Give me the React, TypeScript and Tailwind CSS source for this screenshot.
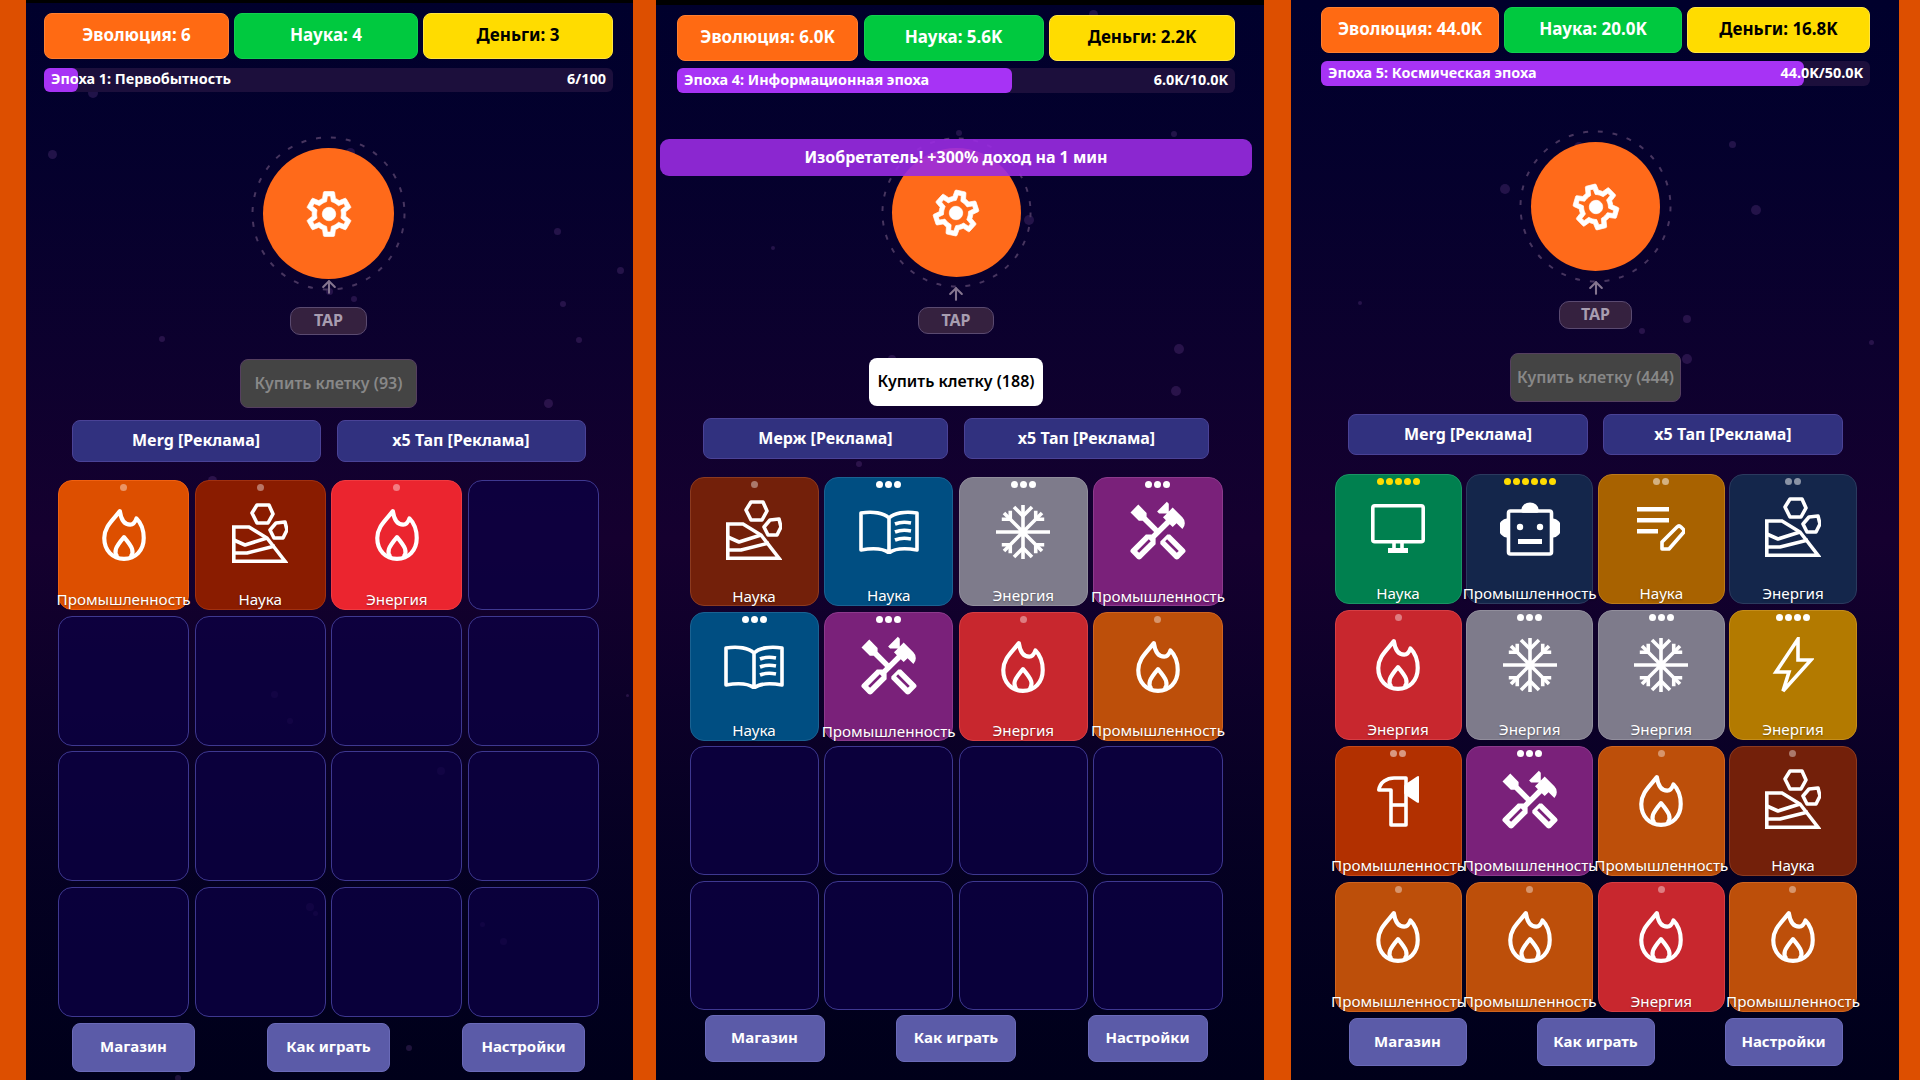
import type { ReactNode } from 'react'
import { ArrowUp } from 'lucide-react'
import { MdOutlineHandyman } from 'react-icons/md'

function Line({ w, h, cls, children }: { w: number; h: number; cls: string; children: ReactNode }) {
  return (
    <svg
      viewBox={`0 0 ${w} ${h}`}
      fill="none"
      stroke="white"
      strokeWidth="3.6"
      strokeLinejoin="round"
      className={cls}
    >
      {children}
    </svg>
  )
}

const FireIcon = () => (
  <Line w={42} h={52} cls="h-[54px] w-[46px]">
    <path d="M17 3C18 10 21 16 27 16C30 16 32 13 33 10C38 15 40 22 40 29C40 41 32 49 21 49C10 49 2 41 2 29C2 18 10 12 17 3Z" strokeWidth="4" />
    <path d="M14.5 47C11 42 12.5 38 21 28C29.5 38 31 42 27.5 47" strokeWidth="4" />
  </Line>
)

const RocksIcon = () => (
  <Line w={56} h={60} cls="mb-[5px] h-[60px] w-[56px]">
    <path d="M1.8 24H17L35 35L53 58.2H1.8Z" strokeLinejoin="miter" />
    <path d="M1.8 37L13 42L35 35" />
    <path d="M1.8 50L15 50L43 43" />
    <path d="M25 2L37 2L41 11L36 20L25 20L20 10Z" />
    <path d="M44 20L53 19L55 27L51 35L42 35L38 27Z" />
  </Line>
)

const BookIcon = () => (
  <Line w={60} h={44} cls="h-[44px] w-[60px]">
    <path d="M30 8C25 3 14 1 2 3V40C14 38 24 38 30 43C36 38 46 38 58 40V3C46 1 35 3 30 8V43" />
    <path d="M36 14C41 12 47 12 52 13" />
    <path d="M36 22C41 20 47 20 52 21" />
    <path d="M36 30C41 28 47 28 52 29" />
  </Line>
)

const SnowIcon = () => (
  <Line w={56} h={56} cls="size-[56px]">
    <path d="M28 1V55M1 28H55M9 9L47 47M47 9L9 47" />
    {[0, 180].map((a) => (
      <path key={a} d="M19 3L28 12L37 3" transform={`rotate(${a} 28 28)`} />
    ))}
    {[45, 135, 225, 315].map((a) => (
      <path key={a} d="M22 4L28 10L34 4" transform={`rotate(${a} 28 28)`} />
    ))}
  </Line>
)

const ToolsIcon = () => <MdOutlineHandyman className="size-[66px] shrink-0 text-white" />

const MonitorIcon = () => (
  <Line w={54} h={50} cls="h-[50px] w-[54px]">
    <rect x="1.8" y="1.8" width="50.4" height="36" rx="2" />
    <path d="M23 38V45M31 38V45" />
    <rect x="17" y="44" width="20" height="5" fill="white" stroke="none" />
  </Line>
)

const RobotIcon = () => (
  <Line w={60} h={54} cls="h-[54px] w-[60px]">
    <rect x="8.5" y="9" width="43" height="43" rx="2" strokeWidth="3.6" />
    <path d="M23 9C23 0 37 0 37 9Z" fill="white" />
    <path d="M8 18C-2 19 -2 33 8 34Z" fill="white" />
    <path d="M52 18C62 19 62 33 52 34Z" fill="white" />
    <circle cx="20" cy="25" r="3.2" fill="white" stroke="none" />
    <circle cx="40" cy="25" r="3.2" fill="white" stroke="none" />
    <rect x="18" y="37" width="24" height="5" fill="white" stroke="none" />
  </Line>
)

const NoteIcon = () => (
  <Line w={48} h={44} cls="h-[44px] w-[48px]">
    <rect x="0" y="0" width="32" height="4.5" fill="white" stroke="none" />
    <rect x="0" y="11" width="32" height="4.5" fill="white" stroke="none" />
    <rect x="0" y="22" width="21" height="4.5" fill="white" stroke="none" />
    <path d="M25 42V35L40 20Q42 18 44 20L46 22Q48 24 46 26L32 42Z" />
  </Line>
)

const BoltIcon = () => (
  <Line w={42} h={56} cls="h-[56px] w-[42px]">
    <path d="M26 2L4 35H17L11 54L39 23H26Z" strokeLinejoin="miter" />
  </Line>
)

const HammerIcon = () => (
  <Line w={42} h={51} cls="h-[51px] w-[42px]">
    <path d="M1.8 14C3 6 10 2 17 2H29V49H14V14Z" />
    <path d="M14 29H29" />
    <path d="M29 10L41 2V25L29 17Z" fill="white" />
  </Line>
)

const icons = {
  fire: FireIcon,
  rocks: RocksIcon,
  book: BookIcon,
  snow: SnowIcon,
  tools: ToolsIcon,
  monitor: MonitorIcon,
  robot: RobotIcon,
  note: NoteIcon,
  bolt: BoltIcon,
  hammer: HammerIcon,
}

type IconName = keyof typeof icons
type CellData = { icon: IconName; label: string; bg: string; dots: number }

const IND = 'Промышленность'
const SCI = 'Наука'
const ENE = 'Энергия'

const firstCells: CellData[] = [
  { icon: 'fire', label: IND, bg: 'bg-[#dd4f00] border-[#f06010]', dots: 1 },
  { icon: 'rocks', label: SCI, bg: 'bg-[#8a1c00] border-[#a03010]', dots: 1 },
  { icon: 'fire', label: ENE, bg: 'bg-[#eb252f] border-[#f03a40]', dots: 1 },
]

const secondCells: CellData[] = [
  { icon: 'rocks', label: SCI, bg: 'bg-[#73200a] border-[#8c3a20]', dots: 1 },
  { icon: 'book', label: SCI, bg: 'bg-[#004e82] border-[#1a6292]', dots: 3 },
  { icon: 'snow', label: ENE, bg: 'bg-[#7e7b8b] border-[#918e9c]', dots: 3 },
  { icon: 'tools', label: IND, bg: 'bg-[#7a217a] border-[#8c3a8c]', dots: 3 },
  { icon: 'book', label: SCI, bg: 'bg-[#004e82] border-[#1a6292]', dots: 3 },
  { icon: 'tools', label: IND, bg: 'bg-[#7a217a] border-[#8c3a8c]', dots: 3 },
  { icon: 'fire', label: ENE, bg: 'bg-[#c8272e] border-[#d63e44]', dots: 1 },
  { icon: 'fire', label: IND, bg: 'bg-[#bd4f0a] border-[#cf6420]', dots: 1 },
]

const thirdCells: CellData[] = [
  { icon: 'monitor', label: SCI, bg: 'bg-[#00804f] border-[#1a9464]', dots: 5 },
  { icon: 'robot', label: IND, bg: 'bg-[#14264b] border-[#2b3a5e]', dots: 6 },
  { icon: 'note', label: SCI, bg: 'bg-[#a86200] border-[#bb7a1a]', dots: 2 },
  { icon: 'rocks', label: ENE, bg: 'bg-[#14264b] border-[#2b3a5e]', dots: 2 },
  { icon: 'fire', label: ENE, bg: 'bg-[#c8272e] border-[#d63e44]', dots: 1 },
  { icon: 'snow', label: ENE, bg: 'bg-[#7e7b8b] border-[#918e9c]', dots: 3 },
  { icon: 'snow', label: ENE, bg: 'bg-[#7e7b8b] border-[#918e9c]', dots: 3 },
  { icon: 'bolt', label: ENE, bg: 'bg-[#b37a00] border-[#c48d1a]', dots: 4 },
  { icon: 'hammer', label: IND, bg: 'bg-[#b23000] border-[#c4481a]', dots: 2 },
  { icon: 'tools', label: IND, bg: 'bg-[#7a217a] border-[#8c3a8c]', dots: 3 },
  { icon: 'fire', label: IND, bg: 'bg-[#bd4f0a] border-[#cf6420]', dots: 1 },
  { icon: 'rocks', label: SCI, bg: 'bg-[#73200a] border-[#8c3a20]', dots: 1 },
  { icon: 'fire', label: IND, bg: 'bg-[#bd4f0a] border-[#cf6420]', dots: 1 },
  { icon: 'fire', label: IND, bg: 'bg-[#bd4f0a] border-[#cf6420]', dots: 1 },
  { icon: 'fire', label: ENE, bg: 'bg-[#c8272e] border-[#d63e44]', dots: 1 },
  { icon: 'fire', label: IND, bg: 'bg-[#bd4f0a] border-[#cf6420]', dots: 1 },
]

const panels = [
  {
    panelCls: 'w-[607px] pt-[13px]',
    topCls: 'top-0 h-[3px]',
    innerCls: 'ml-[18px] w-[569px]',
    stats: [
      { text: 'Эволюция: 6', w: 'w-[185px]' },
      { text: 'Наука: 4', w: 'w-[184px]' },
      { text: 'Деньги: 3', w: 'w-[190px]' },
    ],
    statGap: 'gap-[5px]',
    progressCls: 'mt-[9px] h-[24px]',
    fill: 6,
    epoch: 'Эпоха 1: Первобытность',
    progress: '6/100',
    ringCls: 'mt-[44px] size-[155px]',
    circleCls: 'size-[131px]',
    gearCls: '',
    arrowCls: '-bottom-[6px]',
    tapCls: 'mt-[16px] w-[77px] h-[28px]',
    buy: 'Купить клетку (93)',
    buyOn: false,
    buyCls: 'mt-[24px] w-[177px] h-[49px]',
    adsRowCls: 'mt-[12px] gap-[16px] h-[42px]',
    adW: 'w-[249px]',
    mergeText: 'Merg [Реклама]',
    gridCls: 'mt-[18px] w-[541px] gap-[5.67px] auto-rows-[130px]',
    cells: firstCells,
    bottomCls: 'mt-[6px] w-[513px] h-[49px]',
    bottomW: 'w-[123px]',
    specks: [[22, 150, 9], [528, 228, 7], [591, 267, 7], [534, 301, 6], [550, 337, 6], [518, 399, 9], [133, 336, 6], [62, 88, 10], [182, 476, 9], [600, 694, 3], [245, 691, 7], [261, 718, 6], [411, 767, 8], [280, 903, 8], [287, 911, 5], [474, 938, 7], [454, 922, 5], [149, 1075, 6], [380, 1045, 6], [320, 148, 9], [325, 296, 6], [300, 288, 7]],
  },
  {
    panelCls: 'w-[608px] ml-[23px] pt-[15px]',
    topCls: 'top-0 h-[5px]',
    innerCls: 'ml-[21px] w-[558px]',
    stats: [
      { text: 'Эволюция: 6.0K', w: 'w-[181px]' },
      { text: 'Наука: 5.6K', w: 'w-[180px]' },
      { text: 'Деньги: 2.2K', w: 'w-[186px]' },
    ],
    statGap: 'gap-[5.5px]',
    progressCls: 'mt-[7px] h-[25px]',
    fill: 60,
    epoch: 'Эпоха 4: Информационная эпоха',
    progress: '6.0K/10.0K',
    ringCls: 'mt-[44px] size-[151px]',
    circleCls: 'size-[129px]',
    gearCls: 'rotate-[12deg]',
    arrowCls: '-bottom-[16px]',
    tapCls: 'mt-[19px] w-[76px] h-[27px]',
    buy: 'Купить клетку (188)',
    buyOn: true,
    buyCls: 'mt-[24px] w-[174px] h-[48px]',
    adsRowCls: 'mt-[12px] gap-[16px] h-[41px]',
    adW: 'w-[245px]',
    mergeText: 'Мерж [Реклама]',
    gridCls: 'mt-[18px] w-[533px] gap-[5.67px] auto-rows-[129px]',
    cells: secondCells,
    bottomCls: 'mt-[5px] w-[503px] h-[47px]',
    bottomW: 'w-[120px]',
    specks: [[433, 10, 9], [404, 74, 8], [515, 131, 6], [115, 246, 4], [518, 344, 10], [515, 386, 10], [232, 355, 8], [200, 461, 6], [368, 215, 10], [300, 130, 6]],
  },
  {
    panelCls: 'w-[608px] ml-[27px] pt-[7px]',
    topCls: 'hidden',
    innerCls: 'ml-[30px] w-[549px]',
    stats: [
      { text: 'Эволюция: 44.0K', w: 'w-[178px]' },
      { text: 'Наука: 20.0K', w: 'w-[178px]' },
      { text: 'Деньги: 16.8K', w: 'w-[183px]' },
    ],
    statGap: 'gap-[5px]',
    progressCls: 'mt-[8px] h-[25px]',
    fill: 88,
    epoch: 'Эпоха 5: Космическая эпоха',
    progress: '44.0K/50.0K',
    ringCls: 'mt-[44px] size-[153px]',
    circleCls: 'size-[129px]',
    gearCls: '-rotate-[14deg]',
    arrowCls: '-bottom-[15px]',
    tapCls: 'mt-[18px] w-[73px] h-[28px]',
    buy: 'Купить клетку (444)',
    buyOn: false,
    buyCls: 'mt-[24px] w-[171px] h-[49px]',
    adsRowCls: 'mt-[12px] gap-[15px] h-[41px]',
    adW: 'w-[240px]',
    mergeText: 'Merg [Реклама]',
    gridCls: 'mt-[19px] w-[522px] gap-x-[4.67px] gap-y-[6px] auto-rows-[130px]',
    cells: thirdCells,
    bottomCls: 'mt-[6px] w-[494px] h-[48px]',
    bottomW: 'w-[118px]',
    specks: [[438, 141, 7], [209, 184, 10], [460, 205, 10], [67, 301, 4], [392, 315, 8], [348, 328, 6], [578, 340, 5], [391, 354, 10], [283, 142, 10]],
  },
]

const statColors = [
  'bg-[#ff6a13] border-[#ff7f30] text-white',
  'bg-[#00c93f] border-[#10d050] text-white',
  'bg-[#ffdc00] border-[#ffe540] text-black',
]

function Gear({ className }: { className: string }) {
  return (
    <svg viewBox="0 0 24 24" fill="white" stroke="white" strokeWidth="0.3" className={`size-[54px] ${className}`}>
      <path d="M19.43 12.98c.04-.32.07-.64.07-.98 0-.34-.03-.66-.07-.98l2.11-1.65c.19-.15.24-.42.12-.64l-2-3.46c-.09-.16-.26-.25-.44-.25-.06 0-.12.01-.17.03l-2.49 1c-.52-.4-1.08-.73-1.69-.98l-.38-2.65C14.46 2.18 14.25 2 14 2h-4c-.25 0-.46.18-.49.42l-.38 2.65c-.61.25-1.17.59-1.69.98l-2.49-1c-.06-.02-.12-.03-.18-.03-.17 0-.34.09-.43.25l-2 3.46c-.13.22-.07.49.12.64l2.11 1.65c-.04.32-.07.65-.07.98 0 .33.03.66.07.98l-2.11 1.65c-.19.15-.24.42-.12.64l2 3.46c.09.16.26.25.44.25.06 0 .12-.01.17-.03l2.49-1c.52.4 1.08.73 1.69.98l.38 2.65c.03.24.24.42.49.42h4c.25 0 .46-.18.49-.42l.38-2.65c.61-.25 1.17-.59 1.69-.98l2.49 1c.06.02.12.03.18.03.17 0 .34-.09.43-.25l2-3.46c.12-.22.07-.49-.12-.64l-2.11-1.65zm-1.98-1.71c.04.31.05.52.05.73 0 .21-.02.43-.05.73l-.14 1.13.89.7 1.08.84-.7 1.21-1.27-.51-1.04-.42-.9.68c-.43.32-.84.56-1.25.73l-1.06.43-.16 1.13-.2 1.35h-1.4l-.19-1.35-.16-1.13-1.06-.43c-.43-.18-.83-.41-1.23-.71l-.91-.7-1.06.43-1.27.51-.7-1.21 1.08-.84.89-.7-.14-1.13c-.03-.31-.05-.54-.05-.74s.02-.43.05-.73l.14-1.13-.89-.7-1.08-.84.7-1.21 1.27.51 1.04.42.9-.68c.43-.32.84-.56 1.25-.73l1.06-.43.16-1.13.2-1.35h1.39l.19 1.35.16 1.13 1.06.43c.43.18.83.41 1.23.71l.91.7 1.06-.43 1.27-.51.7 1.21-1.07.85-.89.7.14 1.13z" />
      <circle cx="12" cy="12" r="3" />
    </svg>
  )
}

function Cell({ cell }: { cell?: CellData }) {
  if (!cell) {
    return <div className="rounded-[14px] border border-[#3e3890] bg-[#0c0044]/75" />
  }
  const Icon = icons[cell.icon]
  // 5+ dots turn gold
  const dotCls = cell.dots >= 5 ? 'bg-[#ffdc00]' : 'bg-white'
  const dotOpacity = cell.dots === 1 ? 'opacity-40' : cell.dots === 2 ? 'opacity-50' : 'opacity-100'
  return (
    <div className={`flex flex-col items-center rounded-[14px] border pt-[3px] ${cell.bg}`}>
      <div className="flex h-[8px] items-center gap-[2px]">
        {Array.from({ length: cell.dots }).map((_, i) => (
          <span key={i} className={`size-[7px] rounded-full ${dotCls} ${dotOpacity}`} />
        ))}
      </div>
      <div className="mt-[14px] flex h-[60px] items-center justify-center">
        <Icon />
      </div>
      <span className="mt-[24px] whitespace-nowrap text-[15.2px] leading-[20px] text-white [text-shadow:0_1px_2px_rgba(0,0,0,0.35)]">
        {cell.label}
      </span>
    </div>
  )
}

function Panel({ panel, banner }: { panel: (typeof panels)[number]; banner?: string }) {
  const empties = 16 - panel.cells.length
  return (
    <div className={`relative h-[1080px] shrink-0 overflow-hidden bg-gradient-to-b from-[#00002c] via-[#15002f] via-50% to-[#00001a] ${panel.panelCls}`}>
      <div className={`absolute inset-x-0 bg-black ${panel.topCls}`} />

      {/* floating background specks */}
      {panel.specks.map(([x, y, d], i) => (
        <span
          key={i}
          className="absolute rounded-full bg-[#7a4aa0]/25"
          style={{ left: x, top: y, width: d, height: d }}
        />
      ))}

      <div className={`relative flex flex-col items-center ${panel.innerCls}`}>
        {/* Resources */}
        <div className={`flex w-full ${panel.statGap}`}>
          {panel.stats.map((s, i) => (
            <div
              key={s.text}
              className={`flex h-[46px] items-center justify-center rounded-[8px] border pb-[2px] text-[17px] font-bold ${statColors[i]} ${s.w}`}
            >
              {s.text}
            </div>
          ))}
        </div>

        {/* Epoch progress */}
        <div className={`relative w-full rounded-[6px] bg-[#1c0f3c] ${panel.progressCls}`}>
          <div className="h-full rounded-[6px] bg-[#a733f5]" style={{ width: `${panel.fill}%` }} />
          <div className="absolute inset-0 flex items-center justify-between px-[7px] pb-[2px] text-[14.4px] font-bold text-white">
            <span>{panel.epoch}</span>
            <span>{panel.progress}</span>
          </div>
        </div>

        {/* Tap button */}
        <div className={`relative flex items-center justify-center ${panel.ringCls}`}>
          <svg viewBox="0 0 155 155" className="absolute inset-0 size-full" fill="none">
            <circle cx="77.5" cy="77.5" r="76" stroke="#47355f" strokeWidth="2" strokeDasharray="5 10" />
          </svg>
          <div className={`relative flex items-center justify-center rounded-full bg-[#ff6a1a] ${panel.circleCls}`}>
            <Gear className={panel.gearCls} />
          </div>
          <ArrowUp className={`absolute left-1/2 size-[20px] -translate-x-1/2 text-[#85758f] ${panel.arrowCls}`} strokeWidth={2.5} />
        </div>

        <div className={`flex items-center justify-center rounded-[10px] border border-[#5a4a70] bg-[#35213f] pb-[2px] text-[16px] font-bold text-[#a89db0] ${panel.tapCls}`}>
          TAP
        </div>

        {panel.buyOn ? (
          <button className={`rounded-[8px] bg-white pb-[2px] text-[16px] font-semibold text-black ${panel.buyCls}`}>{panel.buy}</button>
        ) : (
          <button className={`rounded-[8px] border border-[#553f5f] bg-[#444444] pb-[2px] text-[16px] font-semibold text-[#888888] ${panel.buyCls}`}>{panel.buy}</button>
        )}

        <div className={`flex justify-center ${panel.adsRowCls}`}>
          {[panel.mergeText, 'x5 Тап [Реклама]'].map((t) => (
            <button key={t} className={`rounded-[8px] border border-[#4a4296] bg-[#31317f] pb-[2px] text-[16px] font-bold text-white ${panel.adW}`}>
              {t}
            </button>
          ))}
        </div>

        {/* Merge grid */}
        <div className={`grid grid-cols-4 ${panel.gridCls}`}>
          {panel.cells.map((c, i) => (
            <Cell key={i} cell={c} />
          ))}
          {Array.from({ length: empties }).map((_, i) => (
            <Cell key={`empty-${i}`} />
          ))}
        </div>

        <div className={`flex justify-between ${panel.bottomCls}`}>
          {['Магазин', 'Как играть', 'Настройки'].map((t) => (
            <button key={t} className={`rounded-[8px] border border-[#6a6ab8] bg-[#5b5ba8] pb-[2px] text-[15px] font-bold text-white ${panel.bottomW}`}>
              {t}
            </button>
          ))}
        </div>
      </div>

      {banner && (
        <div className="absolute left-[4px] top-[139px] flex h-[37px] w-[592px] items-center justify-center rounded-[9px] bg-[#9a2be2]/90 pb-[2px] text-[16px] font-bold text-white">
          {banner}
        </div>
      )}
    </div>
  )
}

export default function App() {
  return (
    <div className="flex h-[1080px] w-[1920px] overflow-hidden bg-[#dd4f00] pl-[26px] font-['Noto_Sans','Liberation_Sans',sans-serif]">
      <Panel panel={panels[0]} />
      <Panel panel={panels[1]} banner="Изобретатель! +300% доход на 1 мин" />
      <Panel panel={panels[2]} />
    </div>
  )
}
